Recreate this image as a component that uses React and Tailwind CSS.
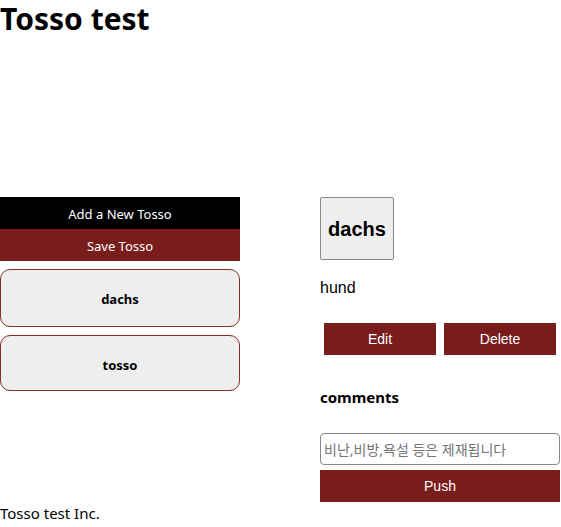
import React from 'react';

const sans = "font-['Noto_Sans','Noto_Sans_CJK_KR',sans-serif]";
const arial = "font-['Liberation_Sans',Arial,sans-serif]";

const tossos = [
  { name: 'dachs', h: 'h-[58px] pt-[4px]' },
  { name: 'tosso', h: 'h-[56px] pt-[5px]' },
];

export default function App() {
  return (
    <div className={`${sans} w-[561px] h-[527px] bg-white text-black flex flex-col`}>
      <h1 className="text-[30px] font-bold leading-[37px]">Tosso test</h1>

      <main className="mt-[160px] flex gap-[80px]">
        {/* Left: tosso list */}
        <section className="w-[240px] flex flex-col">
          <button className="h-8 pt-[3px] bg-black text-white text-[13px]">Add a New Tosso</button>
          <button className="h-8 pt-[3px] bg-[#781c1c] text-white text-[13px]">Save Tosso</button>
          <div className="mt-2 flex flex-col gap-2">
            {tossos.map((t) => (
              <div
                key={t.name}
                className={`${t.h} rounded-[10px] border border-[#8a2c2c] bg-[#eeeeee] flex items-center justify-center text-[13px] font-bold`}
              >
                {t.name}
              </div>
            ))}
          </div>
        </section>

        {/* Right: detail */}
        <section className="w-[240px] flex flex-col">
          <div className={`${arial} self-start w-[74px] h-[63px] border border-[#888] rounded-[2px] bg-[#efefef] flex items-center justify-center text-[20px] font-bold`}>
            dachs
          </div>
          <p className={`${arial} mt-[18px] text-[16px] leading-5`}>hund</p>
          <div className={`${arial} mt-[25px] flex gap-2 px-1`}>
            <button className="flex-1 h-8 bg-[#781c1c] text-white text-[14px]">Edit</button>
            <button className="flex-1 h-8 bg-[#781c1c] text-white text-[14px]">Delete</button>
          </div>
          <h3 className="mt-[32px] text-[15px] font-bold leading-5">comments</h3>
          <input
            className="mt-[26px] h-8 w-full border border-[#888] rounded-[4px] px-[3px] text-[14px] placeholder:text-[#757575] outline-none"
            placeholder="비난,비방,욕설 등은 제재됩니다"
          />
          <button className={`${arial} mt-[5px] h-8 w-full bg-[#781c1c] text-white text-[14px]`}>Push</button>
        </section>
      </main>

      <footer className="mt-[1px] text-[15px] leading-5">Tosso test Inc.</footer>
    </div>
  );
}
